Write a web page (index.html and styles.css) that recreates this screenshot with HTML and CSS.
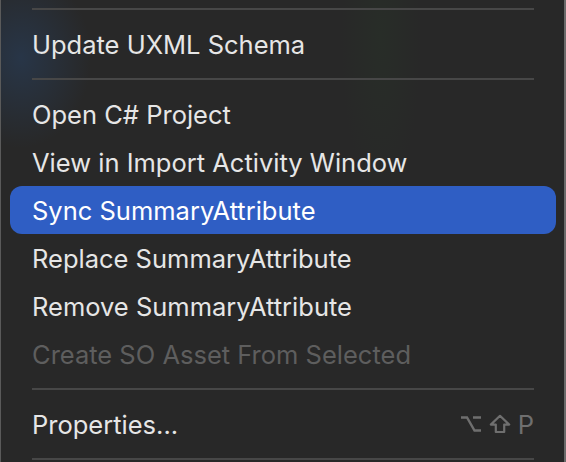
FILE: index.html
```html
<!DOCTYPE html>
<html>
<head>
<meta charset="utf-8">
<link rel="stylesheet" href="styles.css">
</head>
<body>
<div class="menu">
  <div class="sep"></div>
  <div class="item">Update UXML Schema</div>
  <div class="sep"></div>
  <div class="item">Open C# Project</div>
  <div class="item">View in Import Activity Window</div>
  <div class="item active">Sync SummaryAttribute</div>
  <div class="item">Replace SummaryAttribute</div>
  <div class="item">Remove SummaryAttribute</div>
  <div class="item disabled">Create SO Asset From Selected</div>
  <div class="sep"></div>
  <div class="item">
    <span class="label">Properties...</span>
    <span class="shortcut">
      <svg class="key" width="22" height="18" viewBox="0 0 22 18"><path d="M1 2.5 H7 L14.5 15.5 H21 M13 2.5 H21" fill="none" stroke="currentColor" stroke-width="2.4"/></svg>
      <svg class="key" width="22" height="20" viewBox="0 0 22 20"><path d="M11 1.8 L20.2 10.6 H15.2 V18 H6.8 V10.6 H1.8 Z" fill="none" stroke="currentColor" stroke-width="2.2" stroke-linejoin="round"/></svg>
      <span class="pkey">P</span>
    </span>
  </div>
  <div class="sep"></div>
</div>
</body>
</html>
```
FILE: styles.css
```css
html, body {
  margin: 0;
  padding: 0;
  height: 100%;
  overflow: hidden;
}
body {
  background: #262626;
  font-family: "Inter", "Liberation Sans", sans-serif;
}
.menu {
  box-sizing: border-box;
  width: 566px;
  height: 464px;
  margin-top: -2px;
  padding: 0 8px 0 9px;
  border-left: 1px solid #5a5a5a;
  border-right: 2px solid #6a6a6a;
  background:
    radial-gradient(ellipse 70px 90px at 20px 60px, rgba(40, 70, 110, 0.45), transparent),
    radial-gradient(ellipse 40px 160px at 380px 40px, rgba(40, 60, 40, 0.25), transparent),
    #282828;
}
.sep {
  height: 22px;
  display: flex;
  align-items: center;
  padding: 0 22px;
}
.sep::before {
  content: "";
  flex: 1;
  height: 2px;
  background: #474747;
}
.item {
  height: 48px;
  display: flex;
  align-items: center;
  padding: 0 22px;
  font-size: 25.5px;
  color: #e6e6e6;
  border-radius: 12px;
}
.item.active {
  background: #2f5ec4;
  color: #ffffff;
}
.item.disabled {
  color: #5e5e5e;
}
.label {
  flex: 1;
}
.shortcut {
  display: flex;
  align-items: center;
  gap: 7px;
  color: #6f6f6f;
}
.pkey {
  font-size: 25.5px;
}
.key {
  display: block;
}
```
